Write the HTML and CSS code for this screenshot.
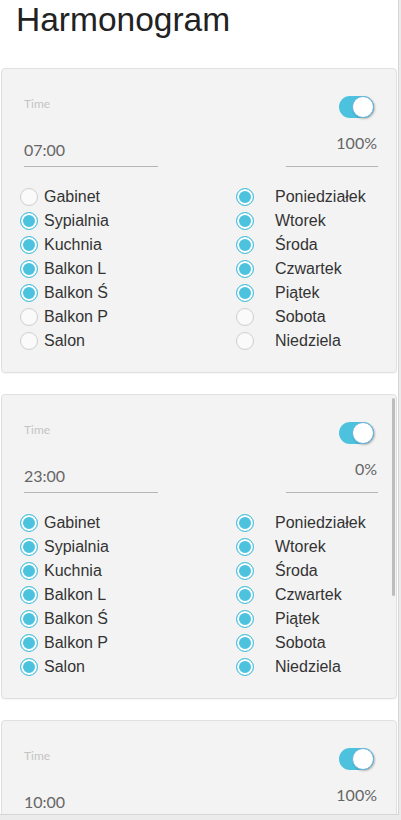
FILE: index.html
```html
<!DOCTYPE html>
<html lang="pl">
<head>
<meta charset="utf-8">
<title>Harmonogram</title>
<link rel="stylesheet" href="styles.css">
</head>
<body>
<div class="screen">
  <h1 class="title">Harmonogram</h1>

  <section class="card">
    <div class="head">
      <div class="time-field">
        <div class="label">Time</div>
        <div class="input">07:00</div>
      </div>
      <div class="level-field">
        <span class="toggle on"><span class="knob"></span></span>
        <div class="input pct">100%</div>
      </div>
    </div>
    <div class="lists">
      <ul class="list rooms">
        <li><span class="radio"></span>Gabinet</li>
        <li><span class="radio on"></span>Sypialnia</li>
        <li><span class="radio on"></span>Kuchnia</li>
        <li><span class="radio on"></span>Balkon L</li>
        <li><span class="radio on"></span>Balkon Ś</li>
        <li><span class="radio"></span>Balkon P</li>
        <li><span class="radio"></span>Salon</li>
      </ul>
      <ul class="list days">
        <li><span class="radio on"></span>Poniedziałek</li>
        <li><span class="radio on"></span>Wtorek</li>
        <li><span class="radio on"></span>Środa</li>
        <li><span class="radio on"></span>Czwartek</li>
        <li><span class="radio on"></span>Piątek</li>
        <li><span class="radio"></span>Sobota</li>
        <li><span class="radio"></span>Niedziela</li>
      </ul>
    </div>
  </section>

  <section class="card">
    <div class="head">
      <div class="time-field">
        <div class="label">Time</div>
        <div class="input">23:00</div>
      </div>
      <div class="level-field">
        <span class="toggle on"><span class="knob"></span></span>
        <div class="input pct">0%</div>
      </div>
    </div>
    <div class="lists">
      <ul class="list rooms">
        <li><span class="radio on"></span>Gabinet</li>
        <li><span class="radio on"></span>Sypialnia</li>
        <li><span class="radio on"></span>Kuchnia</li>
        <li><span class="radio on"></span>Balkon L</li>
        <li><span class="radio on"></span>Balkon Ś</li>
        <li><span class="radio on"></span>Balkon P</li>
        <li><span class="radio on"></span>Salon</li>
      </ul>
      <ul class="list days">
        <li><span class="radio on"></span>Poniedziałek</li>
        <li><span class="radio on"></span>Wtorek</li>
        <li><span class="radio on"></span>Środa</li>
        <li><span class="radio on"></span>Czwartek</li>
        <li><span class="radio on"></span>Piątek</li>
        <li><span class="radio on"></span>Sobota</li>
        <li><span class="radio on"></span>Niedziela</li>
      </ul>
    </div>
  </section>

  <section class="card">
    <div class="head">
      <div class="time-field">
        <div class="label">Time</div>
        <div class="input">10:00</div>
      </div>
      <div class="level-field">
        <span class="toggle on"><span class="knob"></span></span>
        <div class="input pct">100%</div>
      </div>
    </div>
  </section>

  <div class="scroll-thumb"></div>
</div>
</body>
</html>
```

FILE: styles.css
```css
html, body {
  margin: 0;
  padding: 0;
}
body {
  background: #ebebeb;
  font-family: "Liberation Sans", Arial, sans-serif;
  color: #333;
}
.screen {
  position: relative;
  width: 398px;
  height: 814px;
  background: #fff;
  overflow: hidden;
  border-right: 1px solid #d6d6d6;
  border-bottom: 1px solid #d6d6d6;
}
.title {
  margin: 0 0 29px 0;
  padding-left: 16px;
  font-size: 33.5px;
  font-weight: normal;
  line-height: 39px;
  color: #222;
}
.card {
  width: 396px;
  box-sizing: border-box;
  margin: 0 0 21px 1px;
  background: #f3f3f3;
  border: 1px solid #e0e0e0;
  border-radius: 4px;
  box-shadow: 0 1px 1px rgba(0, 0, 0, 0.04);
  padding: 27px 18px 19px 0;
}
.head {
  display: flex;
  justify-content: space-between;
  align-items: flex-end;
  padding-left: 22px;
}
.time-field {
  width: 134px;
}
.label {
  font-family: Lato, "Liberation Sans", sans-serif;
  font-size: 12px;
  line-height: 14px;
  color: #c4c4c4;
  margin-bottom: 29px;
}
.input {
  font-family: Lato, "Liberation Sans", sans-serif;
  font-size: 16px;
  line-height: 20px;
  color: #666;
  padding-bottom: 6px;
  border-bottom: 1px solid #b5b5b5;
}
.level-field {
  width: 92px;
  display: flex;
  flex-direction: column;
  align-items: flex-end;
}
.pct {
  align-self: stretch;
  text-align: right;
  padding-right: 1px;
  padding-bottom: 13px;
  margin-top: 15px;
}
.toggle {
  position: relative;
  display: block;
  width: 35px;
  height: 22px;
  margin-right: 4px;
  border-radius: 11px;
  background: #4cc2de;
}
.toggle .knob {
  position: absolute;
  right: 0;
  top: 0;
  width: 22px;
  height: 22px;
  box-sizing: border-box;
  border-radius: 50%;
  background: #fff;
  border: 1px solid #6cb6dc;
  box-shadow: 1px 1px 2px rgba(0, 0, 0, 0.25);
}
.lists {
  display: flex;
  margin-top: 18px;
  padding-left: 18px;
}
.list {
  list-style: none;
  margin: 0;
  padding: 0;
}
.list li {
  display: flex;
  align-items: center;
  height: 24px;
  font-size: 16px;
  line-height: 24px;
  color: #333;
}
.rooms {
  width: 216px;
}
.rooms .radio {
  margin-right: 6px;
}
.days .radio {
  margin-right: 21px;
}
.radio {
  flex: none;
  width: 18px;
  height: 18px;
  box-sizing: border-box;
  border-radius: 50%;
  border: 1px solid #cfcfcf;
  background: #fafafa;
}
.radio.on {
  border-color: #4cc2de;
  background: #4cc2de;
  box-shadow: inset 0 0 0 2px #fff;
}
.scroll-thumb {
  position: absolute;
  left: 392px;
  top: 398px;
  width: 3px;
  height: 198px;
  border-radius: 2px;
  background: #bdbdbd;
}
```
